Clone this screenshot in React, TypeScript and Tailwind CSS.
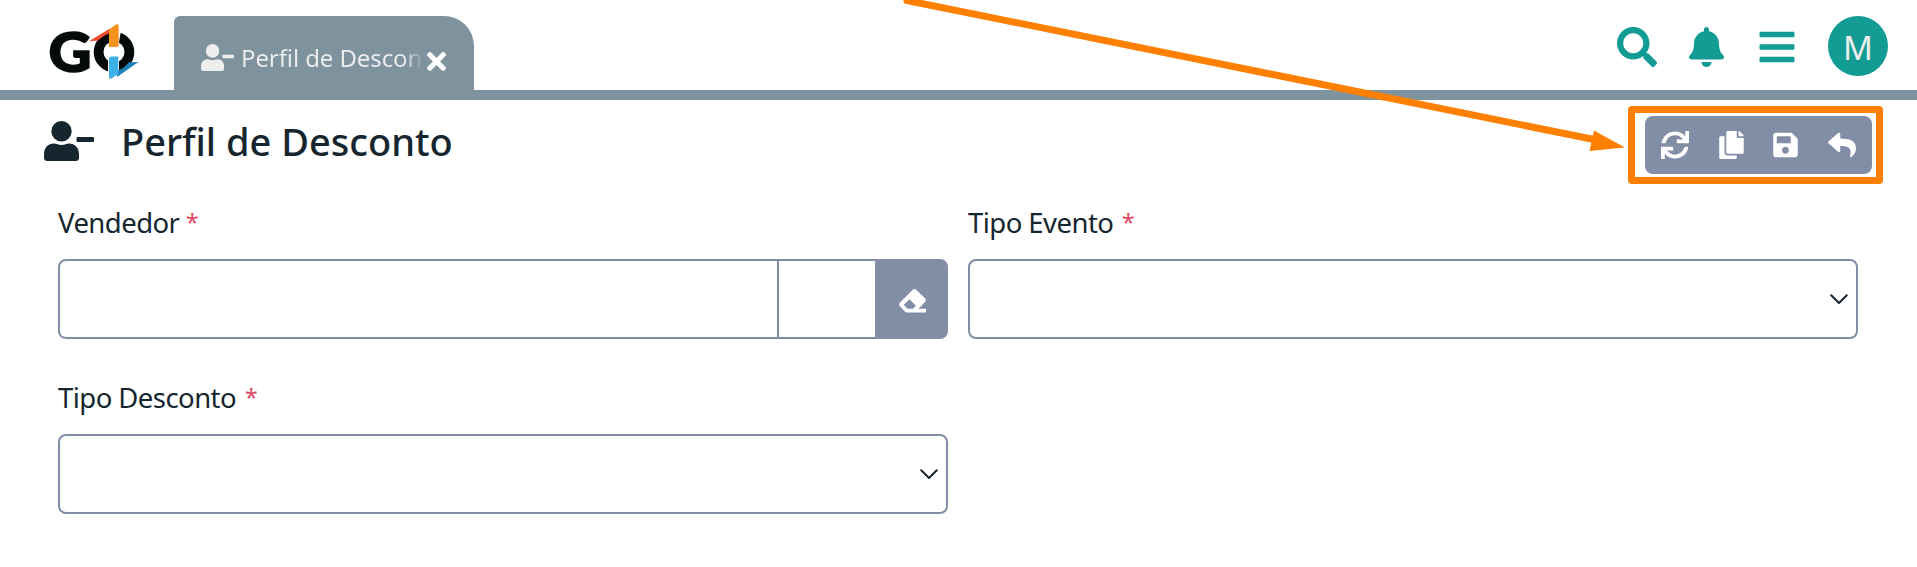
import type { ReactNode } from "react";
import { FaBars, FaBell, FaCopy, FaReply, FaSave, FaSearch, FaSync, FaTimes } from "react-icons/fa";

function UserMinusIcon({ className }: { className?: string }) {
  return (
    <svg viewBox="0 0 50 40" preserveAspectRatio="none" fill="currentColor" className={className}>
      <circle cx="17.5" cy="10.2" r="10.2" />
      <path d="M10 22.5C12.5 22.5 14 24 17.5 24S22.5 22.5 25 22.5C31 22.5 35 27 35 33V36.5Q35 40 31.5 40H3.5Q0 40 0 36.5V33C0 27 4 22.5 10 22.5Z" />
      <rect x="32.5" y="16" width="17.5" height="5" rx="1" />
    </svg>
  );
}

function EraserIcon({ className }: { className?: string }) {
  return (
    <svg viewBox="0 0 27 24" fill="currentColor" className={className}>
      <path
        fillRule="evenodd"
        d="M13.5 1Q15.5-.8 17.5 1L26 9.2Q28 11 26 13L19.5 19.7H27V23.5H7L1 17.5Q-.8 15.5 1 13.5ZM10.5 10.2L4.800 15.8L8.5 19.7H14L17 16.8Z"
      />
    </svg>
  );
}

function Logo() {
  return (
    <svg viewBox="40 0 100 90" className="h-[90px] w-[100px] overflow-visible" role="img" aria-label="GO">
      <text
        x="48.5"
        y="71.5"
        fontSize="55"
        fontWeight="900"
        textLength="43"
        lengthAdjust="spacingAndGlyphs"
        stroke="#050a0a"
        strokeWidth="1.6"
        className="fill-[#050a0a] font-[Lato,sans-serif]"
      >
        G
      </text>
      <circle cx="114" cy="52" r="15.4" fill="none" stroke="#050a0a" strokeWidth="9.8" />
      <path d="M108 28H121.5L118.5 45V50H109V28ZM108 55H119V78H108Z" fill="#fff" />
      <path d="M89 41.3L110 28.5V33Q104 35 98 40.5Z" fill="#ee4a2b" />
      <path d="M109 29.5L116 24.5Q118.7 23.5 118.7 26.5V44.5Q118.7 47 116 47H109Z" fill="#f6921e" />
      <path d="M117 71Q123 69.5 129 62.3L138.5 62L117 77Z" fill="#1c82b8" />
      <path d="M109 59Q109 56.5 111.5 56.5H118.3V74L111.5 78.5Q109 79.5 109 76.5Z" fill="#3eb0e8" />
    </svg>
  );
}

function Chevron() {
  return (
    <svg viewBox="0 0 18 11" className="h-[11px] w-[18px]" fill="none" stroke="#16262f" strokeWidth="2" strokeLinecap="round" strokeLinejoin="round">
      <path d="M1.2 1.2L9 9L16.8 1.2" />
    </svg>
  );
}

function Field({ label, labelWidth, children }: { label: string; labelWidth: string; children: ReactNode }) {
  return (
    <div className="flex flex-col">
      <label className="flex h-[60px] items-start text-[27.5px] leading-[48px] tracking-[-0.55px] text-[#16262f]">
        <span className={`whitespace-nowrap ${labelWidth}`}>{label}</span>
        <span className="text-[23px] leading-[46px] text-[#e04762]">*</span>
      </label>
      {children}
    </div>
  );
}

function Select() {
  return (
    <div className="flex h-20 items-center justify-end rounded-lg border-2 border-[#828ea6] bg-white pr-2">
      <Chevron />
    </div>
  );
}

export default function App() {
  return (
    <div className="relative h-[567px] w-[1917px] overflow-hidden bg-white font-['Noto_Sans','Open_Sans',sans-serif]">
      <header className="flex h-[100px] items-start border-b-[10px] border-[#7e939d]">
        <div className="pl-10">
          <Logo />
        </div>
        <div className="mt-4 ml-[34px] flex h-[74px] w-[300px] items-start rounded-tl-md rounded-tr-[30px] bg-[#7e939d] pl-[27px] text-[#eeeeee]">
          <UserMinusIcon className="mt-7 h-[27px] w-[33px]" />
          <div className="ml-[7px] w-[184px] bg-linear-to-r from-[#eeeeee] from-88% to-transparent bg-clip-text pt-[25px] text-[24px] leading-[34px] tracking-[-0.1px] whitespace-nowrap text-transparent">
            Perfil de Descon
          </div>
          <FaTimes preserveAspectRatio="none" viewBox="0 80 352 352" className="mt-9 ml-[2px] h-[19px] w-[19px] text-white" />
        </div>
        <div className="ml-auto flex items-start pr-[29px] text-[#129c93]">
          <FaSearch className="mt-[27px] size-10" />
          <FaBell className="mt-[27px] ml-[32px] h-10 w-[35px]" />
          <FaBars className="mt-[27px] ml-[35px] h-10 w-[36px]" />
          <div className="mt-4 ml-[33px] flex size-[60px] items-center justify-center rounded-full bg-[#129c93] text-[33px] leading-none text-[#eeeeee]">
            <span className="pt-0.5">M</span>
          </div>
        </div>
      </header>

      <div className="flex h-[98px] items-start pr-[34px] pl-11">
        <UserMinusIcon className="mt-[21px] h-10 w-[50px] text-[#16262f]" />
        <h1 className="mt-[16px] ml-[27px] text-[38px] leading-[50px] font-medium whitespace-nowrap text-[#16262f]">
          Perfil de Desconto
        </h1>
        <div className="mt-1.5 ml-auto flex h-[78px] w-[255px] items-center rounded-[4px] border-[7px] border-[#ff8000] pl-[10px]">
          <div className="flex h-[58px] w-[227px] items-center rounded-lg bg-[#828ea6] pl-4 text-white">
            <FaSync className="size-7" />
            <FaCopy className="ml-[30px] h-7 w-[25px]" />
            <FaSave className="ml-[29px] h-7 w-[25px]" />
            <FaReply className="ml-[30px] size-7" />
          </div>
        </div>
      </div>

      <main className="grid grid-cols-[890px_890px] gap-x-5 gap-y-[35px] pt-px pl-[58px]">
        <Field label="Vendedor" labelWidth="w-[128px]">
          <div className="flex h-20 overflow-hidden rounded-lg border-2 border-[#828ea6] bg-[#828ea6]">
            <div className="w-[719px] border-r-2 border-[#828ea6] bg-white" />
            <div className="w-24 bg-white" />
            <div className="flex flex-1 items-center pl-6 text-white">
              <EraserIcon className="mt-1 h-6 w-[27px]" />
            </div>
          </div>
        </Field>
        <Field label="Tipo Evento" labelWidth="w-[154px]">
          <Select />
        </Field>
        <Field label="Tipo Desconto" labelWidth="w-[187px]">
          <Select />
        </Field>
      </main>

      <svg viewBox="0 0 1917 567" className="pointer-events-none absolute inset-0 h-full w-full">
        <path d="M907 .5L1594 139.5" stroke="#ff8000" strokeWidth="7" strokeLinecap="round" />
        <path d="M1594 130.5L1625 147.5L1589.5 151Z" fill="#ff8000" />
      </svg>
    </div>
  );
}
